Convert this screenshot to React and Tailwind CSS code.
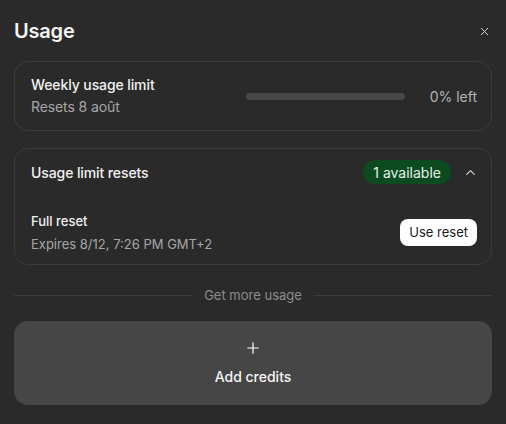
import { X, ChevronUp, Plus } from "lucide-react";

const font = { fontFamily: "Inter, 'Noto Sans', sans-serif" };

function WeeklyLimit() {
  return (
    <div className="flex h-[70px] items-center justify-between rounded-[14px] border border-[#3b3b3b] pl-[16px] pr-[14px]">
      <div className="flex flex-col gap-[2px]">
        <span className="text-[14px] font-medium leading-5 tracking-[-0.1px] text-[#f2f2f2]">
          Weekly usage limit
        </span>
        <span className="text-[14px] leading-5 tracking-[-0.1px] text-[#a6a6a6]">
          Resets 8 août
        </span>
      </div>
      <div className="flex items-center gap-[25px]">
        <div className="h-[7px] w-[159px] rounded-full bg-[#474747]" />
        <span className="text-[14px] text-[#b4b4b4]">0% left</span>
      </div>
    </div>
  );
}

function ResetsCard() {
  return (
    <div className="flex h-[117px] flex-col rounded-[14px] border border-[#3b3b3b] pl-[16px] pr-[14px]">
      <div className="flex h-[46px] items-center justify-between">
        <span className="text-[14px] font-medium tracking-[-0.1px] text-[#f2f2f2]">
          Usage limit resets
        </span>
        <div className="flex items-center gap-[12px]">
          <span className="flex h-[24px] items-center rounded-full bg-[#0c4a20] px-[10px] text-[14px] text-[#e4f2e7]">
            1 available
          </span>
          <ChevronUp size={15} strokeWidth={2} className="mr-[-1px] text-[#d0d0d0]" />
        </div>
      </div>
      <div className="mt-[16px] flex items-center justify-between">
        <div className="flex flex-col gap-[3px]">
          <span className="text-[13px] font-medium leading-5 text-[#f2f2f2]">
            Full reset
          </span>
          <span className="text-[13px] leading-5 text-[#a6a6a6]">
            Expires 8/12, 7:26 PM GMT+2
          </span>
        </div>
        <button className="h-[27px] rounded-[8px] bg-white px-[9px] text-[13px] text-[#1a1a1a]">
          Use reset
        </button>
      </div>
    </div>
  );
}

export default function App() {
  return (
    <div
      style={font}
      className="h-[424px] w-[506px] overflow-hidden bg-[#2a2a2a] px-[14px] pt-[16px] text-white"
    >
      <div className="flex items-center justify-between">
        <h1 className="text-[20px] font-semibold tracking-[-0.2px] text-[#f5f5f5]">Usage</h1>
        <X size={13} strokeWidth={1.8} className="mr-[1px] text-[#d8d8d8]" />
      </div>

      <div className="mt-[15px] flex flex-col gap-[17px]">
        <WeeklyLimit />
        <ResetsCard />
      </div>

      <div className="mt-[21px] flex items-center gap-[12px]">
        <div className="h-px flex-1 bg-[#3d3d3d]" />
        <span className="text-[13px] text-[#8c8c8c]">Get more usage</span>
        <div className="h-px flex-1 bg-[#3d3d3d]" />
      </div>

      <button className="mt-[15px] flex h-[84px] w-full flex-col items-center justify-center gap-[9px] rounded-[14px] bg-[#464646]">
        <Plus size={18} strokeWidth={1.6} className="text-white" />
        <span className="text-[14px] font-medium text-[#f5f5f5]">Add credits</span>
      </button>
    </div>
  );
}
